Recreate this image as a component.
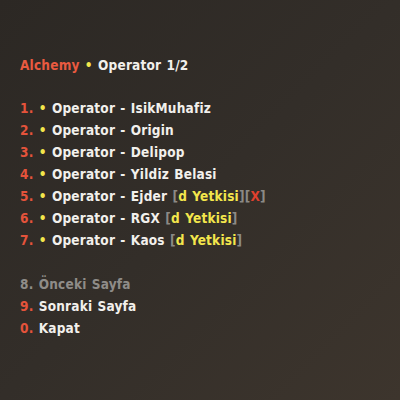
import React from "react";

const R = "text-[#e4533b]";
const W = "text-[#f2f0ec]";
const Y = "text-[#f3e64c]";
const G = "text-[#8c8a86]";

function Item({ n, name, tag, x }: { n: string; name: string; tag?: boolean; x?: boolean }) {
  return (
    <div className="h-[22px] leading-[22px] whitespace-pre">
      <span className={R}>{n}. </span>
      <span className={Y}>• </span>
      <span className={W}>Operator - {name}</span>
      {tag && (
        <>
          <span className={W}> </span>
          <span className={G}>[</span>
          <span className={Y}>d Yetkisi</span>
          <span className={G}>]</span>
        </>
      )}
      {x && (
        <>
          <span className={G}>[</span>
          <span className="text-[#e0402e]">X</span>
          <span className={G}>]</span>
        </>
      )}
    </div>
  );
}

export default function App() {
  return (
    <div
      className="w-[400px] h-[400px] overflow-hidden bg-[linear-gradient(135deg,#2c2824_0%,#332e29_50%,#3d352d_100%)] pl-[20px] pt-[54px] text-[13.5px] font-bold tracking-[0.2px] [word-spacing:0.8px]"
      style={{ fontFamily: '"DejaVu Sans Condensed", "DejaVu Sans", sans-serif', fontStretch: "semi-condensed" }}
    >
      <div className="h-[22px] leading-[22px] whitespace-pre">
        <span className="text-[#ea5a40]">Alchemy </span>
        <span className={Y}>• </span>
        <span className={W}>Operator 1/2</span>
      </div>
      <div className="h-[21px]" />
      <Item n="1" name="IsikMuhafiz" />
      <Item n="2" name="Origin" />
      <Item n="3" name="Delipop" />
      <Item n="4" name="Yildiz Belasi" />
      <Item n="5" name="Ejder" tag x />
      <Item n="6" name="RGX" tag />
      <Item n="7" name="Kaos" tag />
      <div className="h-[22px]" />
      <div className="h-[22px] leading-[22px] whitespace-pre text-[#8f8c88]">8. Önceki Sayfa</div>
      <div className="h-[22px] leading-[22px] whitespace-pre">
        <span className={R}>9. </span>
        <span className={W}>Sonraki Sayfa</span>
      </div>
      <div className="h-[22px] leading-[22px] whitespace-pre">
        <span className={R}>0. </span>
        <span className={W}>Kapat</span>
      </div>
    </div>
  );
}
